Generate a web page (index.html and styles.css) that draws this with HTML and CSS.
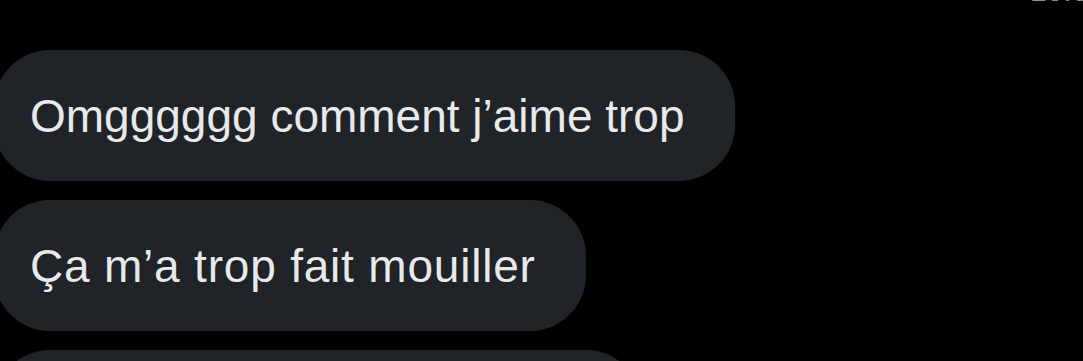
FILE: index.html
```html
<!DOCTYPE html>
<html lang="fr">
<head>
    <meta charset="UTF-8">
    <meta name="viewport" content="width=device-width, initial-scale=1.0">
    <title>Messages</title>
    <link rel="stylesheet" href="styles.css">
</head>
<body>
    <div class="conversation">
        <!-- end of the previous message -->
        <div class="time">10:05</div>

        <div class="messages">
            <div class="bubble">Omgggggg comment j’aime trop</div>
            <div class="bubble wide">Ça m’a trop fait mouiller</div>
            <div class="bubble">C’était trop bien vraiment !!!</div>
        </div>
    </div>
</body>
</html>
```

FILE: styles.css
```css
html, body {
    margin: 0;
    padding: 0;
    height: 100%;
    overflow: hidden;
    background: #000;
}

body {
    font-family: "Liberation Sans", Arial, sans-serif;
    color: #e7e9ea;
}

.conversation {
    display: flex;
    flex-direction: column;
}

.time {
    height: 50px;
    margin-top: -24px;
    margin-right: -22px;
    text-align: right;
    font-size: 30px;
    line-height: 30px;
    color: #8b8f94;
}

.messages {
    display: flex;
    flex-direction: column;
    align-items: flex-start;
    gap: 19px;
    margin-top: 24px;
    margin-left: -6px;
}

.bubble {
    display: flex;
    align-items: center;
    height: 131px;
    padding: 0 50px 0 36px;
    border-radius: 56px;
    background: #202327;
    font-size: 46px;
    white-space: nowrap;
}

.wide {
    letter-spacing: 0.8px;
}
```
